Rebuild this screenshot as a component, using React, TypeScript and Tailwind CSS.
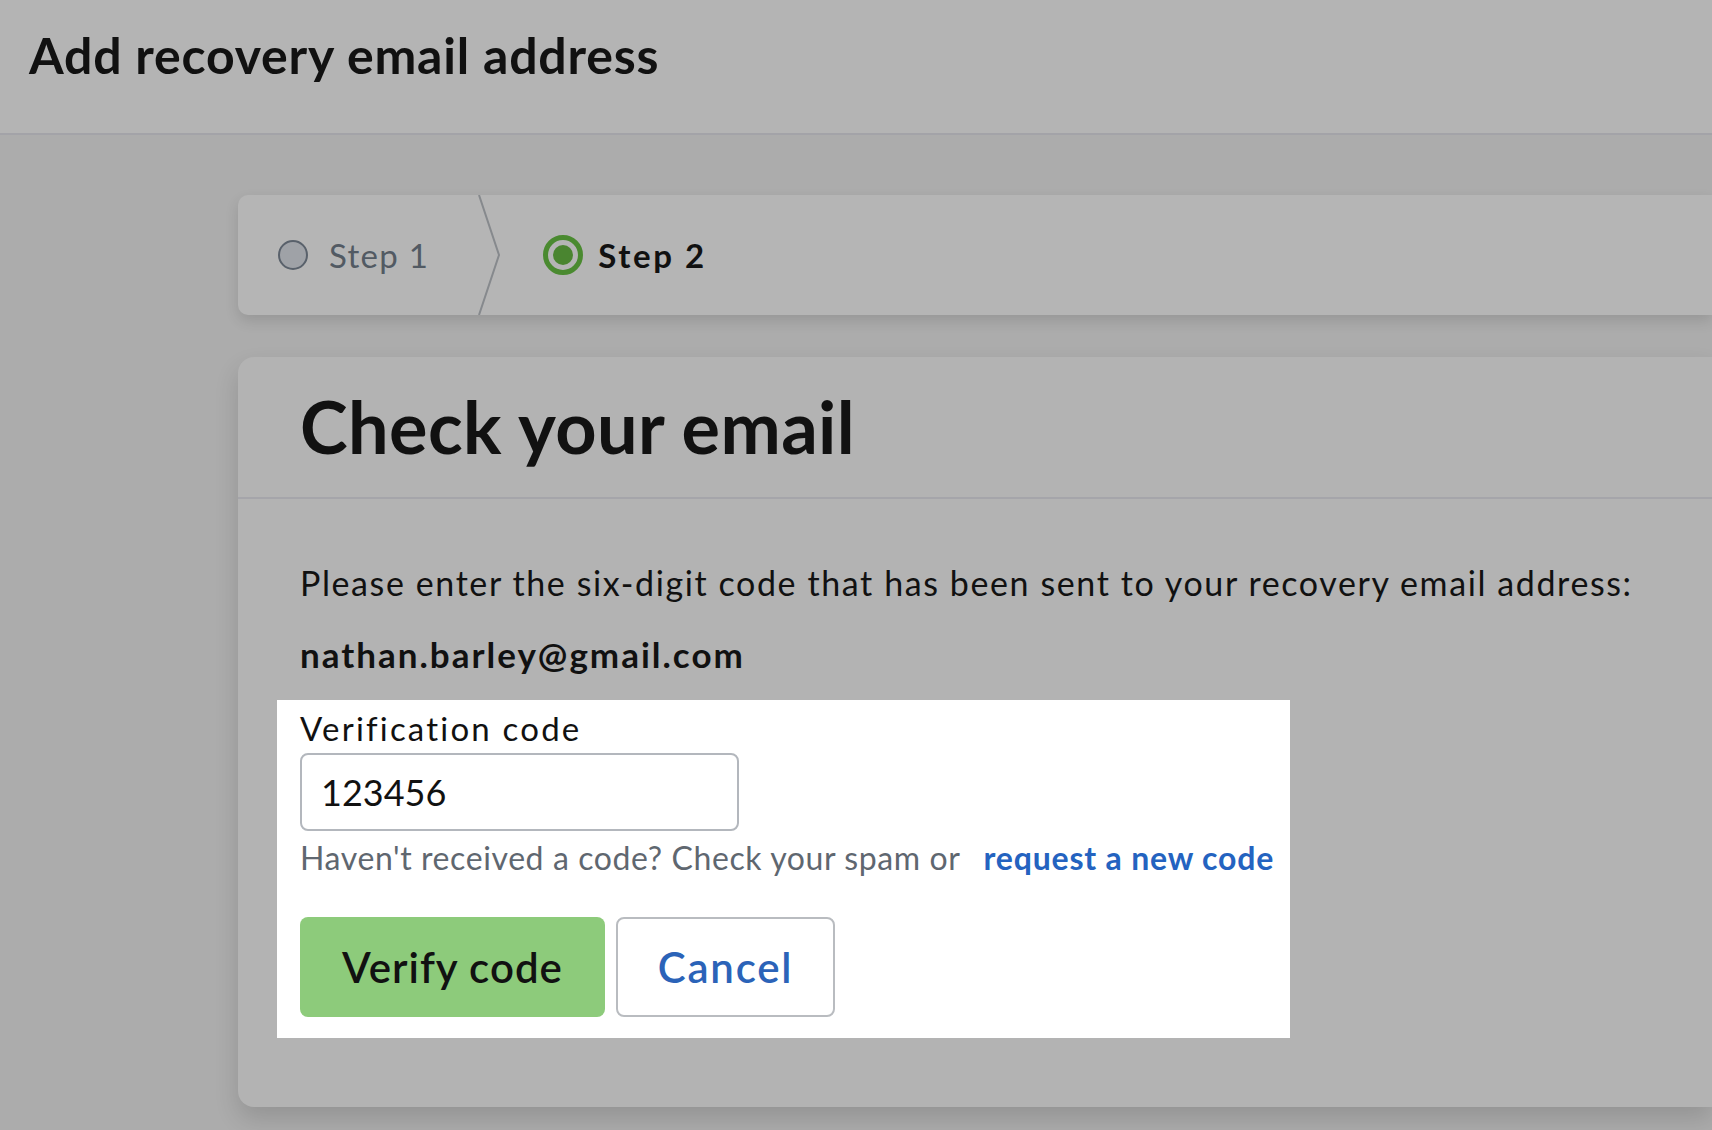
import React from "react";

export default function App() {
  return (
    <div
      className="min-h-[1130px] w-full overflow-hidden bg-[#acacac] text-[#111111]"
      style={{ fontFamily: "Lato, 'Noto Sans', sans-serif" }}
    >
      <header className="h-[135px] border-b-2 border-[#a3a3a8] bg-[#b4b4b4] pl-[29px] pt-[26px]">
        <h1 className="text-[50px] font-bold leading-[58px] tracking-[0.8px]">Add recovery email address</h1>
      </header>

      <main className="pl-[238px] pt-[60px]">
        <div className="flex h-[120px] items-center rounded-l-[10px] bg-[#b5b5b5] shadow-[0_6px_14px_rgba(0,0,0,0.12)]">
          <div className="flex items-center gap-[21px] pl-[40px] pr-[49px]">
            <span className="h-[30px] w-[30px] rounded-full border-2 border-[#59616b] bg-[#9fa2a7]" />
            <span className="text-[33px] leading-[38px] tracking-[1.3px] text-[#525a63]">Step 1</span>
          </div>
          <svg width="24" height="120" viewBox="0 0 24 120" className="shrink-0">
            <path d="M1 0 L21 60 L1 120" fill="none" stroke="#86898d" strokeWidth="2" />
          </svg>
          <div className="flex items-center gap-[15px] pl-[41px]">
            <span className="flex h-[40px] w-[40px] items-center justify-center rounded-full border-[5px] border-[#4a8a30]">
              <span className="h-[20px] w-[20px] rounded-full bg-[#4a8530]" />
            </span>
            <span className="text-[33px] font-bold leading-[38px] tracking-[2.6px]">Step 2</span>
          </div>
        </div>

        <section className="mt-[42px] rounded-l-[16px] bg-[#b3b3b3] shadow-[0_12px_24px_rgba(0,0,0,0.14)]">
          <div className="border-b-2 border-[#a5a5aa] pb-[28px] pl-[62px] pt-[26px]">
            <h2 className="text-[72px] font-bold leading-[86px] tracking-[0.4px]">Check your email</h2>
          </div>
          <div className="pb-[69px] pl-[62px] pt-[65px]">
            <p className="text-[34px] leading-[38px] tracking-[1.6px]">
              Please enter the six-digit code that has been sent to your recovery email address:
            </p>
            <p className="mt-[33px] text-[35px] font-bold leading-[38px] tracking-[2px]">nathan.barley@gmail.com</p>
            <div className="ml-[-23px] mt-[27px] w-[1013px] bg-white pb-[21px] pl-[23px] pt-[9px]">
              <label className="block text-[33px] leading-[38px] tracking-[2.2px]">Verification code</label>
              <div className="mt-[6px] flex h-[78px] w-[439px] items-center rounded-[8px] border-2 border-[#b3b7bd] bg-white pl-[19px] text-[36px]">
                123456
              </div>
              <p className="mt-[8px] flex text-[32px] leading-[38px] tracking-[0.6px] text-[#5f6770]">
                <span>Haven't received a code? Check your spam or</span>
                <a className="ml-[23px] font-bold tracking-[0.8px] text-[#2463c0]">request a new code</a>
              </p>
              <div className="mt-[40px] flex gap-[11px]">
                <button className="flex h-[100px] w-[305px] items-center justify-center rounded-[8px] bg-[#8dcb7b] text-[42px] font-semibold tracking-[1px] text-[#111111]">
                  Verify code
                </button>
                <button className="flex h-[100px] w-[219px] items-center justify-center rounded-[8px] border-2 border-[#b9bcc0] bg-white text-[42px] font-semibold tracking-[1.8px] text-[#2b63b8]">
                  Cancel
                </button>
              </div>
            </div>
          </div>
        </section>
      </main>
    </div>
  );
}
